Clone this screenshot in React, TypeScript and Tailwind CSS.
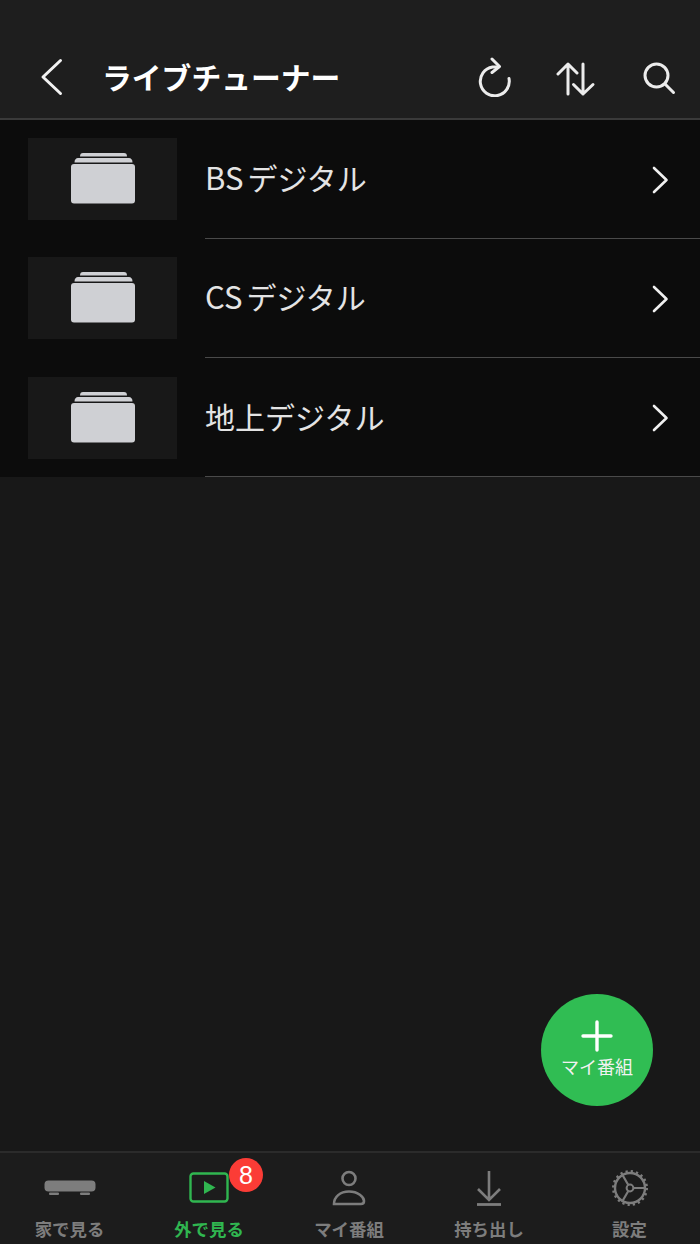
const font = { fontFamily: '"Noto Sans CJK JP", "Noto Sans", sans-serif' };

function FolderIcon() {
  return (
    <svg width="66" height="52" viewBox="0 0 66 52" className="block">
      <path d="M10 4.5 C10 2 11 1 13 1 H54 C56 1 57 2 57 4.5 Z" fill="#cfd0d4" />
      <path d="M4.5 10.5 C4.5 7.5 6 6 8 6 H59 C61 6 62.5 7.5 62.5 10.5 Z" fill="#cfd0d4" />
      <rect x="1" y="12" width="64" height="39.5" rx="3" fill="#cfd0d4" />
    </svg>
  );
}

function Row({ latin, label, thumbTop }: { latin?: string; label: string; thumbTop: string }) {
  return (
    <div className="flex h-[119px] items-stretch pl-[28px]">
      <div className={`mr-[28px] flex h-[82px] w-[149px] shrink-0 items-center justify-center bg-[#181818] pb-[3px] ${thumbTop}`}>
        <FolderIcon />
      </div>
      <div className="flex flex-1 items-center justify-between border-b border-[#4a4a4a] pr-[31px]">
        <span className={`text-[30px] leading-none text-[#e4e4e4] ${latin ? "pb-[6px]" : "pb-[2px]"}`}>
          {latin && <span className="mr-[4px] text-[31px]">{latin}</span>}
          {label}
        </span>
        <svg className="mt-[2px]" width="18" height="28" viewBox="0 0 18 28" fill="none" stroke="#f0f0f0" strokeWidth="2.6" strokeLinecap="round" strokeLinejoin="round">
          <path d="M3 2 L15.5 14 L3 26" />
        </svg>
      </div>
    </div>
  );
}

function Tab({ label, active, width, children }: { label: string; active?: boolean; width: string; children: React.ReactNode }) {
  return (
    <div className={`relative flex flex-col items-center ${width}`}>
      <div className="flex h-[52px] w-full items-center justify-center pt-[17px]">{children}</div>
      <span className={`mt-[12px] text-[17.4px] font-bold leading-[24px] ${active ? "text-[#30b650]" : "text-[#7d7d7d]"}`}>{label}</span>
    </div>
  );
}

export default function App() {
  return (
    <div className="relative flex h-[1244px] w-[700px] flex-col overflow-hidden bg-[#181818]" style={font}>
      <header className="flex h-[120px] shrink-0 items-end border-b-2 border-[#3a3a3a] bg-[#1e1e1e]">
        <div className="flex h-[79px] w-full items-center pb-[3px]">
          <svg className="ml-[40px]" width="24" height="38" viewBox="0 0 24 38" fill="none" stroke="#f2f2f2" strokeWidth="3" strokeLinecap="round" strokeLinejoin="round">
            <path d="M20.5 2.5 L3 19 L20.5 35.5" />
          </svg>
          <h1 className="ml-[38px] text-[29.8px] font-bold leading-none text-white">ライブチューナー</h1>
          <div className="ml-auto flex items-center pr-[24px]">
            <svg width="36" height="40" viewBox="0 0 36 40" fill="none" stroke="#ececec" strokeWidth="3" strokeLinecap="round" strokeLinejoin="round">
              <path d="M32 21.5 A14.5 14.5 0 1 1 15.5 10 L20.5 10" />
              <path d="M15 2 L22.5 9.5 L15 15.5" />
            </svg>
            <svg className="ml-[43px] mt-[3px]" width="42" height="36" viewBox="0 0 42 36" fill="none" stroke="#ececec" strokeWidth="3" strokeLinecap="round" strokeLinejoin="round">
              <path d="M12 33 L12 3 M2 13 L12 3 L21 12" />
              <path d="M27 3 L27 33 M17.5 23.5 L27 33 L37 23.5" />
            </svg>
            <svg className="ml-[44px] mt-[2px]" width="34" height="34" viewBox="0 0 34 34" fill="none" stroke="#ececec" strokeWidth="3" strokeLinecap="round">
              <circle cx="14.5" cy="14.5" r="11.5" />
              <path d="M23 23 L31.5 31.5" />
            </svg>
          </div>
        </div>
      </header>

      <section className="h-[357px] shrink-0 bg-[#0c0c0c]">
        <Row latin="BS" label="デジタル" thumbTop="mt-[18px]" />
        <Row latin="CS" label="デジタル" thumbTop="mt-[18px]" />
        <Row label="地上デジタル" thumbTop="mt-[19px]" />
      </section>

      <div className="flex-1" />

      <button className="absolute left-[541px] top-[994px] flex h-[112px] w-[112px] flex-col items-center rounded-full bg-[#30bd53] text-white">
        <svg className="mt-[26px]" width="32" height="32" viewBox="0 0 32 32" stroke="#fff" strokeWidth="3.4" strokeLinecap="round">
          <path d="M16 2 V30 M2 16 H30" />
        </svg>
        <span className="mt-[1px] text-[18px] leading-[26px] text-[#f2f2f2]">マイ番組</span>
      </button>

      <nav className="flex h-[93px] shrink-0 overflow-hidden border-t-2 border-[#2b2b2b] bg-[#1c1c1c]">
        <Tab label="家で見る" width="w-[139px]">
          <svg width="52" height="16" viewBox="0 0 52 16" fill="#7d7d7d">
            <rect x="0.5" y="0.5" width="51" height="11" rx="4" />
            <rect x="5" y="12.5" width="10" height="2.5" rx="1" />
            <rect x="36" y="12.5" width="10" height="2.5" rx="1" />
          </svg>
        </Tab>
        <Tab label="外で見る" active width="w-[140px]">
          <svg width="40" height="31" viewBox="0 0 40 31" fill="none">
            <rect x="1.5" y="1.5" width="37" height="28" rx="3" stroke="#30b650" strokeWidth="2.4" />
            <path d="M15 9 L26.5 15.5 L15 22 Z" fill="#30b650" />
          </svg>
          <span className="absolute left-[90px] top-[5px] flex h-[34px] w-[34px] items-center justify-center rounded-full bg-[#fb3c36] text-[25px] leading-none text-white" style={{ fontFamily: '"Liberation Sans", sans-serif' }}>8</span>
        </Tab>
        <Tab label="マイ番組" width="w-[140px]">
          <svg width="34" height="36" viewBox="0 0 34 36" fill="none" stroke="#7d7d7d" strokeWidth="2.6" strokeLinecap="round">
            <circle cx="17" cy="8.5" r="6.5" />
            <path d="M2 34 C2 27 8 21.5 17 21.5 C26 21.5 32 27 32 31 C32 33.5 31 34 29 34 L2 34 Z" />
          </svg>
        </Tab>
        <Tab label="持ち出し" width="w-[140px]">
          <svg width="26" height="36" viewBox="0 0 26 36" fill="none" stroke="#7d7d7d" strokeWidth="2.6">
            <path d="M13 1 V30 M2 19 L13 30 L24 19" />
            <path d="M1 34.5 H25" strokeWidth="2.8" />
          </svg>
        </Tab>
        <Tab label="設定" width="w-[141px]">
          <svg width="38" height="38" viewBox="0 0 38 38" fill="none" stroke="#7d7d7d">
            <circle cx="19" cy="19" r="15" strokeWidth="2.4" />
            <circle cx="19" cy="19" r="16.5" strokeWidth="3" strokeDasharray="2.2 3" />
            <circle cx="19" cy="19" r="3.4" strokeWidth="2" />
            <path d="M22.4 19 H34 M17.3 16 L11.5 6 M17.3 22 L11.5 32" strokeWidth="2.2" />
          </svg>
        </Tab>
      </nav>
    </div>
  );
}
